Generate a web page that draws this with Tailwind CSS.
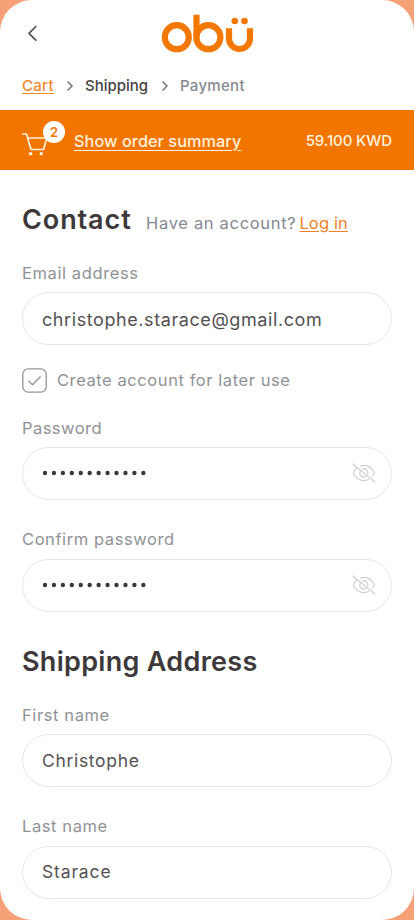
<!DOCTYPE html>
<html lang="en">
<head>
<meta charset="utf-8">
<meta name="viewport" content="width=device-width, initial-scale=1">
<title>obü – Shipping</title>
<script src="https://cdn.jsdelivr.net/npm/@tailwindcss/browser@4"></script>
</head>
<body class="bg-[#f6a077] font-['Inter',sans-serif] text-[#474344]">
<svg class="hidden">
  <symbol id="dots" viewBox="0 0 106 6"><path d="M3 3h100" fill="none" stroke="#3d393a" stroke-width="4.400" stroke-linecap="round" stroke-dasharray="0 8.940"/></symbol>
  <symbol id="eye-off" viewBox="0 0 24 20"><path fill="none" stroke="#d2d2d2" stroke-width="1.300" stroke-linecap="round" d="M1 1l22 18M8.500 3C14.500.8 19.500 4 22 9c.5 1.200.3 2-1.500 4.300M4.500 5.200C1 8.800.8 9.800 2.500 12.300c3.500 5.200 9.500 6.700 14.300 4M11 6.100c3-.6 5.500 1.700 4.800 4.800M8.200 8.500c-1.400 3.400 2 6.700 5.500 5"/></symbol>
</svg>
<div class="flex h-[920px] w-[414px] flex-col overflow-hidden rounded-[32px] bg-white whitespace-nowrap">
  <header class="flex h-[110px] flex-col">
    <div class="grid h-[67px] grid-cols-[1fr_94px_1fr] items-center pl-[27px]">
      <svg class="h-[18px] w-3" viewBox="0 0 12 18" fill="none" stroke="#555152" stroke-width="1.7" stroke-linecap="round" stroke-linejoin="round"><path d="M8.800 1.500 2 8.300l6.800 6.800"/></svg>
      <svg class="h-10 w-[94px] -translate-x-[13.500px]" viewBox="160 13.500 94 40" fill="none" stroke="#f27800" stroke-width="6.200" role="img" aria-label="obü">
        <circle cx="176.300" cy="36.700" r="12"/>
        <circle cx="207.900" cy="36.700" r="12"/>
        <path d="M196 14.300V37"/>
        <path d="M228.500 27.700V38a10.500 10.500 0 0 0 21 0V27.700"/>
        <g fill="#f27800" stroke="none"><circle cx="234.300" cy="20.500" r="3.300"/><circle cx="244" cy="20.500" r="3.300"/></g>
      </svg>
    </div>
    <nav class="flex h-[37px] items-center pl-[22px] text-[15px] font-medium">
      <a class="w-8 pt-px tracking-[0.3px] text-[#f08a2c] underline underline-offset-2">Cart</a>
      <svg class="ml-3 h-3 w-2" viewBox="0 0 8 12" fill="none" stroke="#77777b" stroke-width="1.500"><path d="M1.500 1.500 6 6l-4.500 4.500"/></svg>
      <span class="ml-[11px] w-[64px] pt-px">Shipping</span>
      <svg class="ml-3 h-3 w-2" viewBox="0 0 8 12" fill="none" stroke="#77777b" stroke-width="1.500"><path d="M1.500 1.500 6 6l-4.500 4.500"/></svg>
      <span class="ml-[11px] pt-px tracking-[0.3px] text-[#858990]">Payment</span>
    </nav>
  </header>

  <section class="flex h-[60px] shrink-0 items-center justify-between bg-[#f27500] px-[22px] pt-[2px] text-[#fff0dc]">
    <div class="flex items-center">
      <div class="relative h-10 w-[52px]">
        <svg class="absolute top-[11px] left-0 h-6 w-[26px]" viewBox="0 0 26 24" fill="none" stroke="#fff0dc" stroke-width="1.700" stroke-linecap="round" stroke-linejoin="round"><path d="M.8 2h3.700l4.500 15.500h12.500L24.800 6H5.700"/><g fill="#fff0dc" stroke="none"><circle cx="8.600" cy="21.700" r="1.800"/><circle cx="19.300" cy="21.700" r="1.800"/></g></svg>
        <span class="absolute top-0 left-[21px] flex size-[22px] items-center justify-center rounded-full bg-white pt-px text-[13px] font-semibold text-[#f27500]">2</span>
      </div>
      <a class="text-[16.300px] font-medium tracking-[0.050px] underline underline-offset-[3px]">Show order summary</a>
    </div>
    <span class="text-[15px] font-medium tracking-[-0.1px]">59.100 KWD</span>
  </section>

  <main class="flex flex-col px-[22px] pt-[32px] text-[16.500px]">
    <div class="flex h-9 items-baseline">
      <h1 class="w-[124px] text-[27px] leading-9 font-semibold tracking-[0.900px] text-[#3d393a]">Contact</h1>
      <p class="tracking-[0.680px] text-[#858990]">Have an account?</p>
      <a class="ml-[3px] tracking-[0.150px] text-[#ee8228] underline underline-offset-2">Log in</a>
    </div>

    <label class="mt-[23px] flex flex-col gap-[7px] text-[#909295]">
      <span class="h-6 leading-6 tracking-[0.600px]">Email address</span>
      <span class="flex h-[53px] items-center rounded-full border border-[#e6e6e6] px-[19px] pt-px text-[18px] tracking-[0.580px] text-[#555152]">christophe.starace@gmail.com</span>
    </label>

    <label class="mt-[23px] flex h-[25px] items-center gap-2.5 text-[#909295]">
      <svg class="size-[25px]" viewBox="0 0 25 25" fill="none" stroke="#949494" stroke-width="1.300" stroke-linecap="round" stroke-linejoin="round"><rect x=".8" y=".8" width="23.400" height="23.400" rx="5.500"/><path d="m6.800 13 3.700 3.700 7.700-7.900"/></svg>
      <span class="tracking-[0.570px]">Create account for later use</span>
    </label>

    <div class="mt-[22.500px] flex flex-col gap-[27px]">
      <label class="flex flex-col gap-[7.500px] text-[#909295]">
        <span class="h-6 leading-6 tracking-[0.450px]">Password</span>
        <span class="flex h-[53px] items-center justify-between rounded-full border border-[#e6e6e6] pr-[15px] pb-px pl-[19px]">
          <svg class="h-1.5 w-[106px]"><use href="#dots"/></svg>
          <svg class="h-5 w-6"><use href="#eye-off"/></svg>
        </span>
      </label>
      <label class="flex flex-col gap-[7.500px] text-[#909295]">
        <span class="h-6 leading-6 tracking-[0.580px]">Confirm password</span>
        <span class="flex h-[53px] items-center justify-between rounded-full border border-[#e6e6e6] pr-[15px] pb-px pl-[19px]">
          <svg class="h-1.5 w-[106px]"><use href="#dots"/></svg>
          <svg class="h-5 w-6"><use href="#eye-off"/></svg>
        </span>
      </label>
    </div>

    <h2 class="mt-[32.500px] h-9 text-[27px] leading-9 font-semibold tracking-[0.300px] text-[#3d393a]">Shipping Address</h2>

    <div class="mt-[22.500px] flex flex-col gap-[27px]">
      <label class="flex flex-col gap-[7.500px] text-[#909295]">
        <span class="h-6 leading-6 tracking-[0.600px]">First name</span>
        <span class="flex h-[53px] items-center rounded-full border border-[#e6e6e6] px-[19px] pt-px text-[17.500px] tracking-[0.680px] text-[#555152]">Christophe</span>
      </label>
      <label class="flex flex-col gap-[7.500px] text-[#909295]">
        <span class="h-6 leading-6 tracking-[0.600px]">Last name</span>
        <span class="flex h-[53px] items-center rounded-full border border-[#e6e6e6] px-[19px] pt-px text-[17.500px] tracking-[0.850px] text-[#555152]">Starace</span>
      </label>
    </div>
  </main>
</div>
</body>
</html>
